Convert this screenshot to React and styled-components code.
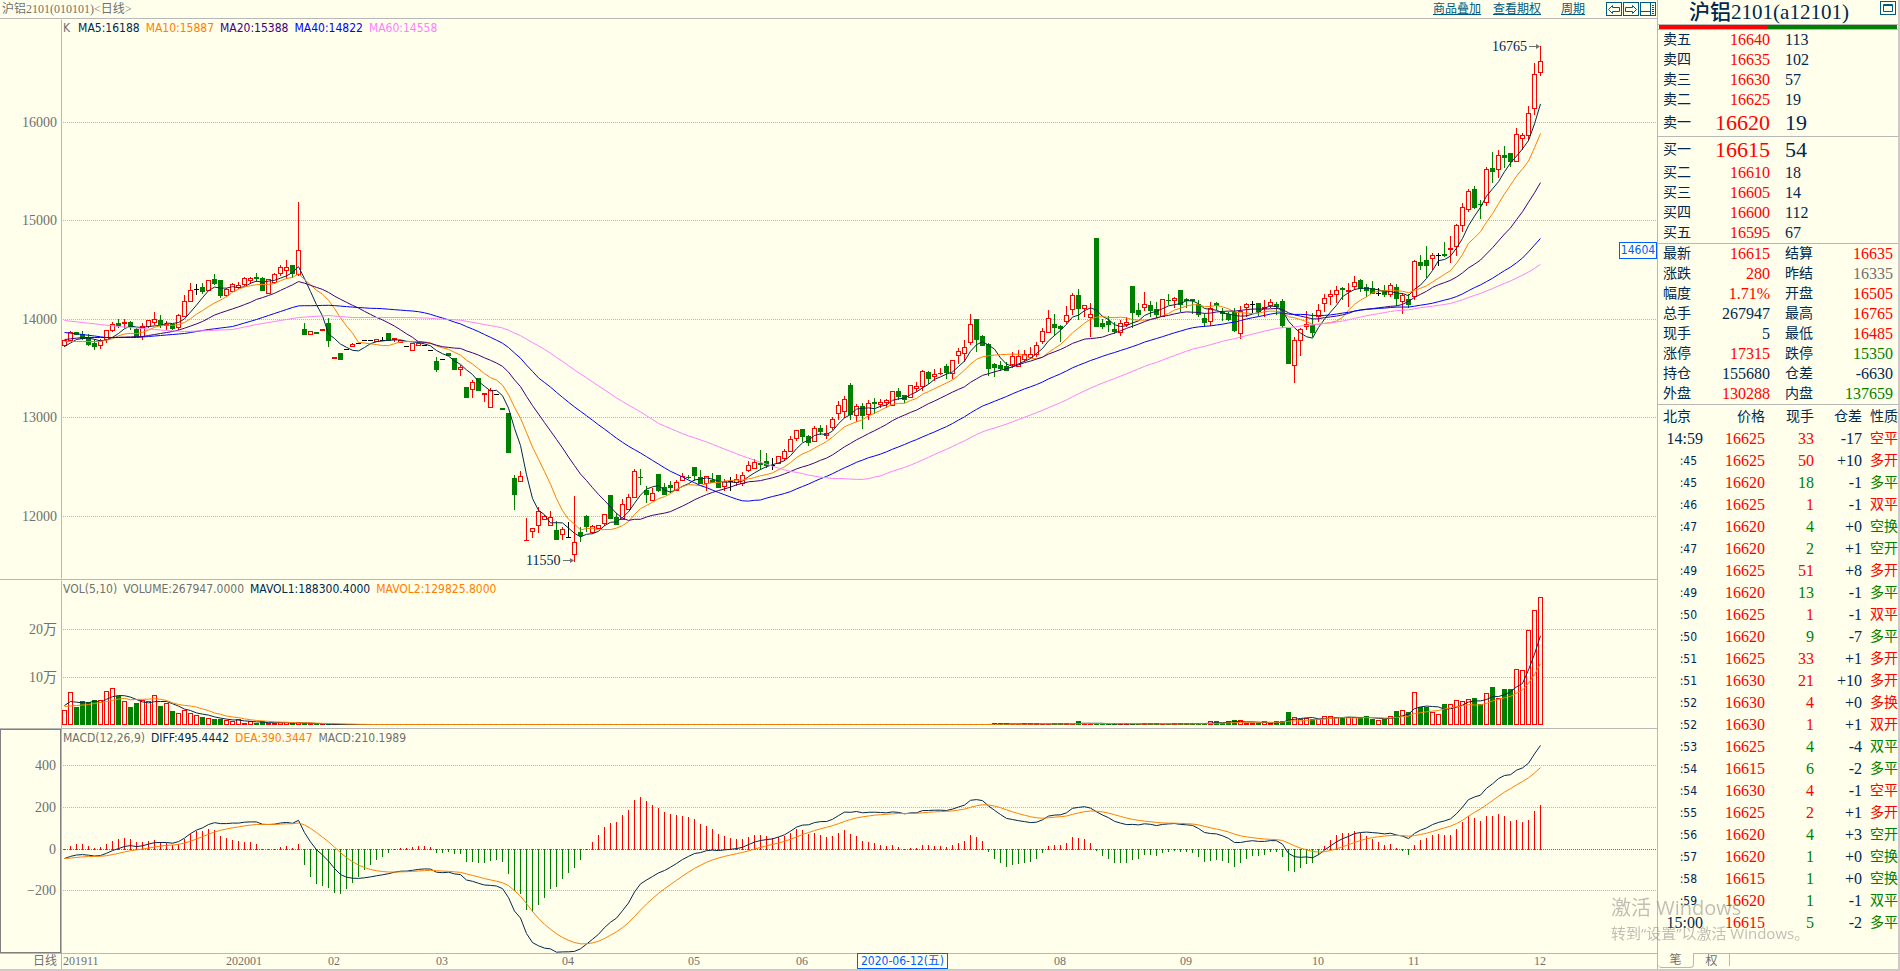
import React from "react";
import styled, { createGlobalStyle } from "styled-components";

const BG = "#ffffeb";
const LINE = "#b8b8b8";
const NAVY = "#002850";
const ORANGE = "#ff8000";
const PURPLE = "#400080";
const BLUE = "#0000ff";
const PINK = "#ff80ff";
const RED = "#ff0000";
const GREEN = "#008000";
const GREY = "#707070";
const LINK = "#005a82";

const COLORS = { r: RED, g: GREEN, k: "#000000", n: NAVY, d: GREY };

const DIGITS = `"Liberation Serif", "Noto Sans CJK SC", serif`;
const LABELS = `"DejaVu Sans Condensed", "Noto Sans", "Noto Sans CJK SC", sans-serif`;

const GlobalStyle = createGlobalStyle`
  * {
    box-sizing: border-box;
  }
  body {
    margin: 0;
    background: ${BG};
    color: ${NAVY};
    font-family: ${DIGITS};
  }
  button {
    border: none;
    background: none;
    padding: 0;
    cursor: pointer;
  }
`;

const Screen = styled.div`
  display: grid;
  grid-template-columns: minmax(0, 1fr) 241px;
  min-height: 100vh;
  border-right: 2px solid #d0c8c8;
  border-bottom: 2px solid #d0c8c8;
  overflow: hidden;
`;
const ChartColumn = styled.main`
  display: flex;
  flex-direction: column;
  min-width: 0;
`;
const TopBar = styled.header`
  display: flex;
  align-items: center;
  height: 19px;
  padding: 0 1px 0 2px;
  border-bottom: 1px solid ${LINE};
  font-size: 12px;
  color: ${GREY};

  h2 {
    margin: 0 auto 0 0;
    font-size: 12px;
    line-height: 18px;
    font-weight: normal;
  }
`;
const BarLinks = styled.nav`
  display: flex;
  gap: 12px;
  margin-right: 21px;
`;
const BarLink = styled.a`
  color: ${LINK};
  font-size: 12px;
  line-height: 16px;
  text-decoration: underline;
  margin-left: ${(props) => (props.$apart ? "8px" : "0")};
`;
const IconRow = styled.div`
  display: flex;
  gap: 1px;
`;
const IconButton = styled.button`
  display: block;
  line-height: 0;
  color: ${LINK};
`;

const Pane = styled.section`
  display: grid;
  grid-template-columns: 62px minmax(0, 1fr);
  height: ${(props) => props.$height}px;
  border-bottom: 1px solid ${LINE};
`;
const Gutter = styled.div`
  border: 1px solid ${(props) => (props.$active ? "#808080" : "transparent")};
  border-right: 1px solid ${LINE};
  box-shadow: ${(props) => (props.$active ? "inset -1px 0 #808080" : "none")};

  svg {
    display: block;
    width: 100%;
    height: 100%;
    overflow: visible;
  }
  text {
    font: 14px ${DIGITS};
    fill: ${GREY};
    text-anchor: end;
  }
`;
const Plot = styled.div`
  position: relative;

  svg {
    display: block;
    width: 100%;
    height: 100%;
  }
`;
const Legend = styled.div`
  position: absolute;
  top: 0;
  left: 1px;
  display: flex;
  gap: 6px;
  font: 12px/19px ${LABELS};
  white-space: nowrap;
`;
const LegendItem = styled.span`
  color: ${(props) => props.$color};
  margin-right: ${(props) => (props.$wide ? "2px" : "0")};
`;
const Mark = styled.text`
  font: ${(props) => props.$size}px ${DIGITS};
  fill: ${(props) => props.$color};
`;
const Tag = styled.div`
  position: absolute;
  height: 17px;
  border: 1px solid #0060ff;
  background: ${BG};
  color: #0060ff;
  font: 12px/15px ${LABELS};
  white-space: nowrap;
  text-align: center;
`;
const PriceTag = styled(Tag)`
  right: 0;
  top: 223px;
  width: 38px;
`;
const DateTag = styled(Tag)`
  left: 795px;
  top: -1px;
  height: 16px;
  width: 91px;
`;
const Axis = styled.div`
  display: grid;
  grid-template-columns: 62px minmax(0, 1fr);
  grid-template-rows: 15px;
  height: 15px;
  color: ${GREY};
  font-size: 12px;
  line-height: 15px;
`;
const Period = styled.div`
  border-right: 1px solid ${LINE};
  padding-right: 4px;
  text-align: right;
  overflow: hidden;
`;

const Side = styled.aside`
  display: flex;
  flex-direction: column;
  border-left: 1px solid ${LINE};
`;
const Title = styled.div`
  display: flex;
  height: 24px;
  padding: 1px 2px 0 0;

  h1 {
    flex: 1;
    margin: 0;
    font-size: 21px;
    line-height: 23px;
    font-weight: 500;
    text-align: center;
  }
  button {
    align-self: flex-start;
  }
`;
const Strength = styled.div`
  display: flex;
  height: 6px;
  padding: 0 1px;
  border: solid ${LINE};
  border-width: 1px 0;

  span {
    width: 46%;
    background: ${RED};
  }
  span + span {
    flex: 1;
    background: ${GREEN};
  }
`;
const Book = styled.table`
  width: 100%;
  table-layout: fixed;
  border-spacing: 0;
  border-bottom: 1px solid ${LINE};
  font-size: 16px;
`;
const BookRow = styled.tr`
  height: ${(props) => (props.$best ? "26px" : "20px")};
`;
const NameCell = styled.th`
  width: ${(props) => props.$width}px;
  padding: 0 0 0 ${(props) => props.$left}px;
  font-size: 14px;
  line-height: 16px;
  font-weight: normal;
  text-align: left;
`;
const NumCell = styled.td`
  width: ${(props) => (props.$width ? `${props.$width}px` : "auto")};
  padding: 0 ${(props) => props.$right || 0}px 0 0;
  font-size: ${(props) => (props.$best ? "22px" : "16px")};
  line-height: 18px;
  text-align: right;
  color: ${(props) => COLORS[props.$tone || "n"]};
`;
const LotCell = styled(NumCell)`
  padding-left: 15px;
  text-align: left;
`;

const Ticks = styled.table`
  width: 100%;
  table-layout: fixed;
  border-spacing: 0;
  font-size: 16px;

  th {
    height: 23px;
    padding: 0;
    font-size: 14px;
    line-height: 16px;
    font-weight: normal;
    text-align: right;
  }
  th:first-child {
    padding-left: 5px;
    text-align: left;
  }
  tbody tr {
    height: 22px;
  }
`;
const TimeCell = styled.td`
  padding: 0 ${(props) => (props.$full ? "0" : "6px")} 0 0;
  font: ${(props) => (props.$full ? `16px/18px ${DIGITS}` : `12px/18px ${LABELS}`)};
  text-align: right;
`;
const KindCell = styled.td`
  padding: 0;
  font-size: 14px;
  line-height: 16px;
  text-align: right;
  color: ${(props) => COLORS[props.$tone]};
`;
const Tabs = styled.div`
  display: flex;
  height: 16px;
  margin-top: auto;
  border-top: 1px solid ${LINE};
`;
const Tab = styled.button`
  width: 36px;
  height: ${(props) => (props.$active ? "15px" : "12px")};
  margin-top: ${(props) => (props.$active ? "-1px" : "0")};
  border-right: 1px solid ${LINE};
  border-bottom: ${(props) => (props.$active ? `1px solid ${LINE}` : "none")};
  border-radius: ${(props) => (props.$active ? "0 0 4px 4px" : "0")};
  background: ${BG};
  color: ${GREY};
  font: 12px/14px ${DIGITS};
`;
const Watermark = styled.div`
  position: fixed;
  right: 0;
  bottom: 28px;
  width: 289px;
  pointer-events: none;
  color: rgba(128, 128, 128, 0.5);
  font-family: "Open Sans", "Noto Sans CJK SC", sans-serif;
  font-size: 15px;
  line-height: 20px;
  white-space: nowrap;

  p {
    margin: 0;
  }
  p:first-child {
    font-size: 20px;
    line-height: 30px;
  }
`;

// one bar per entry: direction, high, body top, body bottom, low (chart rows)
const BARS = `
r 340 340 345 346;r 331 332 340 340;g 332 332 334 334;g 331 334 338 339;g 334 337 344 345;g 339 343 346 349;
r 339 340 345 348;r 330 330 339 342;r 322 324 330 331;g 319 323 325 327;r 319 322 323 327;g 321 322 326 329;
g 328 329 336 336;r 323 326 336 339;r 320 320 326 327;r 312 319 322 324;g 315 320 324 327;r 321 324 325 329;
g 324 324 328 329;r 314 315 327 329;r 295 301 316 316;r 283 290 301 301;k 284 289 289 294;g 283 287 291 293;
r 280 280 290 290;g 274 279 283 284;g 280 280 295 297;r 288 289 295 296;r 283 284 291 291;r 282 285 287 288;
r 277 278 284 285;r 277 278 280 283;g 273 277 278 281;g 277 278 290 290;r 279 279 293 293;r 273 274 282 283;
r 265 267 273 275;r 260 267 270 278;g 265 265 273 277;r 202 250 274 275;g 323 329 334 334;r 331 331 334 334;
g 332 332 333 333;r 329 329 330 330;g 318 323 340 346;r 357 357 358 358;g 353 353 359 359;k 349 349 349 349;
r 343 344 346 346;k 343 343 343 343;k 340 340 340 340;k 340 340 340 340;r 339 339 341 341;k 337 340 340 340;
g 333 333 340 340;r 338 338 339 341;r 340 340 342 342;k 346 346 346 346;r 343 343 350 350;r 343 343 345 345;
k 345 345 345 345;k 350 350 350 350;g 357 361 369 371;k 359 359 359 359;g 353 353 355 355;g 358 358 369 369;
r 365 367 369 375;g 387 387 397 397;r 380 382 389 397;g 378 378 390 390;r 393 393 394 401;r 388 390 407 407;
k 394 394 394 394;g 408 408 409 409;g 413 413 452 452;g 475 478 494 509;r 471 476 481 481;r 518 540 540 540;
r 528 528 531 537;r 507 511 525 532;r 515 516 519 519;r 511 517 525 525;g 521 530 539 539;r 527 529 534 539;
k 522 537 537 537;r 496 542 554 561;g 527 532 535 541;g 515 516 526 531;r 525 526 532 533;r 525 525 528 528;
r 514 514 523 525;g 495 495 518 518;g 513 517 524 524;r 499 504 519 519;r 494 497 509 509;r 469 471 497 497;
g 469 477 477 484;g 486 490 494 502;r 488 493 500 500;g 474 474 490 491;g 483 487 494 494;g 481 485 487 492;
r 480 482 490 490;r 473 476 480 480;g 475 477 477 478;g 467 467 475 480;g 470 477 483 483;r 476 476 483 490;
g 473 480 482 482;g 475 475 487 487;r 479 481 486 490;k 477 481 481 490;r 474 479 482 485;r 472 475 483 485;
r 461 465 470 471;r 459 462 468 468;g 450 463 464 469;g 453 461 465 467;k 458 465 465 469;r 456 456 463 463;
r 449 451 458 460;r 436 439 451 451;r 430 430 438 440;g 429 429 436 441;g 435 436 442 445;r 426 428 441 441;
g 425 428 431 434;r 425 433 435 438;r 417 419 427 429;r 401 405 413 419;r 396 399 411 417;g 383 385 414 419;
r 404 406 415 421;g 403 406 415 428;r 400 403 414 419;g 398 402 403 413;r 399 402 404 407;r 399 400 402 407;
r 391 391 405 405;g 388 391 396 399;g 395 395 399 402;r 385 385 397 397;r 382 386 388 391;r 370 371 386 390;
g 371 372 378 383;r 369 374 376 380;r 368 373 373 374;g 364 366 372 378;r 360 360 373 378;r 348 351 355 363;
r 340 347 353 361;r 314 324 342 344;g 319 319 339 351;g 335 336 345 345;g 343 344 368 375;g 363 364 367 376;
g 361 365 368 370;g 362 366 370 370;r 352 356 364 367;r 350 356 366 366;r 350 354 359 361;r 347 354 357 358;
r 342 345 354 356;r 328 331 341 343;r 310 318 332 332;g 314 324 327 335;g 325 326 328 341;r 306 315 321 323;
r 293 295 309 314;g 289 295 308 319;r 305 305 308 316;r 303 314 317 336;g 238 238 326 326;g 319 323 326 328;
g 316 321 324 331;g 322 329 331 333;r 320 323 332 335;r 317 322 324 326;g 286 286 312 327;g 303 310 314 316;
r 292 304 307 310;g 301 305 310 316;g 302 309 314 317;r 299 299 316 316;g 294 300 300 304;r 297 298 300 307;
g 290 290 304 311;g 298 299 300 307;g 299 299 300 313;g 300 304 314 316;g 313 318 322 326;r 302 308 321 325;
g 302 303 305 309;g 308 312 313 320;g 312 314 319 320;g 308 312 330 331;r 306 311 333 338;r 303 304 307 316;
k 301 304 304 312;g 303 303 311 315;r 300 307 308 316;r 299 302 305 307;g 302 304 306 314;g 299 301 325 327;
g 328 328 363 363;r 337 340 365 382;r 328 329 340 355;r 311 324 326 329;g 313 325 332 336;r 304 310 316 321;
r 294 298 303 311;r 290 294 296 304;r 286 290 294 302;g 287 288 289 299;r 283 290 291 306;r 276 282 286 289;
g 279 280 288 291;g 284 287 290 296;g 281 288 293 293;k 288 293 293 295;g 285 290 294 296;r 283 285 294 296;
g 284 287 298 305;r 293 295 301 313;g 294 299 304 307;r 260 261 296 299;g 255 262 265 269;g 246 260 265 277;
r 253 255 258 269;k 253 255 255 265;g 242 254 255 256;r 236 248 249 262;r 224 225 246 255;r 203 207 225 231;
r 189 191 209 211;g 186 189 207 208;g 200 204 204 218;r 167 169 202 205;g 152 168 171 182;r 150 155 169 177;
g 146 155 157 167;g 153 153 161 166;r 128 134 161 161;r 133 135 138 149;r 106 113 135 140;r 63 74 108 114;
r 46 61 72 75`
  .split(";")
  .map((row) => {
    const [dir, ...n] = row.trim().split(" ");
    const [high, top, bottom, low] = n.map(Number);
    return { dir, high, top, bottom, low, close: dir === "g" ? bottom : top };
  });

const VOL_HEAD = [
  15, 33, 18, 24, 23, 25, 25, 34, 37, 29, 24, 18, 22, 25, 24, 30, 19, 22, 14, 12, 15, 12, 10, 8, 7, 6, 6, 5, 4, 6, 2,
  4, 2, 4, 2, 2, 3, 3, 2, 3, 2, 2,
];
const VOL_TAIL = [
  2, 2, 2, 4, 4, 2, 4, 5, 5, 2, 2, 2, 4, 2, 4, 4, 13, 8, 6, 7, 6, 6, 9, 9, 8, 8, 8, 8, 8, 9, 6, 5, 6, 9, 14, 15, 13,
  33, 18, 18, 13, 11, 21, 21, 25, 24, 26, 27, 21, 32, 38, 27, 36, 36, 56, 55, 95, 115, 128,
];
const VOLUMES = BARS.map((bar, i) => {
  const tail = i - (BARS.length - VOL_TAIL.length);
  if (i < VOL_HEAD.length) return VOL_HEAD[i];
  if (tail >= 0) return VOL_TAIL[tail];
  if (i === 169) return 4;
  return i > 153 && i % 5 < 3 ? 2 : 1;
});

const STEP = 6;
const xOf = (i) => 2 + i * STEP;

// fills the bars before the window is full from [index, value] knots
const lead = (knots, i) => {
  const k = knots.findIndex((p) => p[0] >= i);
  if (k <= 0) return knots[Math.max(k, 0)][1];
  const [x0, y0] = knots[k - 1];
  const [x1, y1] = knots[k];
  return y0 + ((y1 - y0) * (i - x0)) / (x1 - x0);
};
const average = (values, size, knots) =>
  values.map((v, i) =>
    i < size - 1 ? lead(knots, i) : values.slice(i - size + 1, i + 1).reduce((a, b) => a + b, 0) / size
  );

const CLOSES = BARS.map((bar) => bar.close);
const MAS = [
  [5, NAVY, [[0, 346], [2, 339], [4, 337]]],
  [10, ORANGE, [[0, 341], [6, 341], [9, 337]]],
  [20, PURPLE, [[0, 339], [3, 337], [8, 337], [13, 336], [16, 333], [19, 330]]],
  [40, BLUE, [[0, 332], [3, 334], [7, 337], [12, 337], [16, 335], [20, 333], [24, 329], [28, 326], [32, 319], [39, 305]]],
  [60, PINK, [[0, 320], [9, 326], [17, 330], [20, 331], [28, 329], [32, 324], [39, 317], [44, 315], [48, 317], [59, 317]]],
].map(([size, color, knots]) => ({ color, values: average(CLOSES, size, knots) }));

const VOL_MAS = [
  { color: NAVY, values: average(VOLUMES, 5, [[0, 20], [1, 24], [4, 22]]) },
  { color: ORANGE, values: average(VOLUMES, 10, [[0, 19], [4, 21], [9, 26]]) },
];

const MACD = (() => {
  let fast = 340.2;
  let slow = 336;
  let dea = -9;
  return CLOSES.map((close, i) => {
    if (i > 0) {
      fast += ((close - fast) * 2) / 13;
      slow += ((close - slow) * 2) / 27;
    }
    const diff = (slow - fast) * 2.132;
    if (i > 0) dea += (diff - dea) / 5;
    return { diff, dea, bar: Math.round((diff - dea) * 2) };
  });
})();

const MONTHS = [
  [27, "202001"],
  [44, "02"],
  [62, "03"],
  [83, "04"],
  [104, "05"],
  [122, "06"],
  [165, "08"],
  [186, "09"],
  [208, "10"],
  [224, "11"],
  [245, "12"],
];

const ASKS = [
  ["卖五", "16640", "113"],
  ["卖四", "16635", "102"],
  ["卖三", "16630", "57"],
  ["卖二", "16625", "19"],
  ["卖一", "16620", "19"],
];
const BIDS = [
  ["买一", "16615", "54"],
  ["买二", "16610", "18"],
  ["买三", "16605", "14"],
  ["买四", "16600", "112"],
  ["买五", "16595", "67"],
];
const STATS = [
  ["最新", "16615", "r", "结算", "16635", "r"],
  ["涨跌", "280", "r", "昨结", "16335", "d"],
  ["幅度", "1.71%", "r", "开盘", "16505", "r"],
  ["总手", "267947", "n", "最高", "16765", "r"],
  ["现手", "5", "n", "最低", "16485", "r"],
  ["涨停", "17315", "r", "跌停", "15350", "g"],
  ["持仓", "155680", "n", "仓差", "-6630", "n"],
  ["外盘", "130288", "r", "内盘", "137659", "g"],
];
const TICKS = [
  ["14:59", "16625", "33", "-17", "空平", "r"],
  [":45", "16625", "50", "+10", "多开", "r"],
  [":45", "16620", "18", "-1", "多平", "g"],
  [":46", "16625", "1", "-1", "双平", "r"],
  [":47", "16620", "4", "+0", "空换", "g"],
  [":47", "16620", "2", "+1", "空开", "g"],
  [":49", "16625", "51", "+8", "多开", "r"],
  [":49", "16620", "13", "-1", "多平", "g"],
  [":50", "16625", "1", "-1", "双平", "r"],
  [":50", "16620", "9", "-7", "多平", "g"],
  [":51", "16625", "33", "+1", "多开", "r"],
  [":51", "16630", "21", "+10", "多开", "r"],
  [":52", "16630", "4", "+0", "多换", "r"],
  [":52", "16630", "1", "+1", "双开", "r"],
  [":53", "16625", "4", "-4", "双平", "g"],
  [":54", "16615", "6", "-2", "多平", "g"],
  [":54", "16630", "4", "-1", "空平", "r"],
  [":55", "16625", "2", "+1", "多开", "r"],
  [":56", "16620", "4", "+3", "空开", "g"],
  [":57", "16620", "1", "+0", "空换", "g"],
  [":58", "16615", "1", "+0", "空换", "g"],
  [":59", "16620", "1", "-1", "双平", "g"],
  ["15:00", "16615", "5", "-2", "多平", "g"],
];

const GridLine = ({ y, dark }) => (
  <line
    x1="1"
    x2="100%"
    y1={y + 0.5}
    y2={y + 0.5}
    stroke={dark ? "#707070" : "#b8b8b8"}
    strokeDasharray="1 1"
    shapeRendering="crispEdges"
  />
);

const Curve = ({ values, color }) => (
  <polyline
    fill="none"
    stroke={color}
    points={values.map((v, i) => `${xOf(i) + 0.5},${(v + 0.5).toFixed(1)}`).join(" ")}
  />
);

const Candle = ({ bar, i }) => {
  const x = xOf(i);
  const color = COLORS[bar.dir];
  const height = bar.bottom - bar.top;
  return (
    <g>
      <rect x={x} y={bar.high} width="1" height={bar.low - bar.high + 1} fill={color} />
      <rect x={x - 2} y={bar.top} width="5" height={height + 1} fill={color} />
      {bar.dir === "r" && height > 1 && (
        <rect x={x - 1} y={bar.top + 1} width="3" height={height - 1} fill={BG} />
      )}
    </g>
  );
};

const VolumeBar = ({ dir, value, i }) => {
  const x = xOf(i);
  const hollow = dir !== "g" && value > 2;
  return (
    <g>
      <rect x={x - 2} y={145 - value} width="5" height={value} fill={dir === "g" ? GREEN : RED} />
      {hollow && <rect x={x - 1} y={146 - value} width="3" height={value - 2} fill={BG} />}
    </g>
  );
};

const Arrow = ({ x, y }) => (
  <g>
    <path d={`M${x} ${y + 0.5}h10`} stroke={GREY} />
    <path d={`M${x + 7} ${y - 2}l4 2.5l-4 2.5z`} fill={GREY} />
  </g>
);

const Icon = ({ children }) => (
  <svg width="16" height="15" viewBox="0 0 16 15" fill="none" stroke="currentColor" aria-hidden="true">
    <rect x="0.5" y="0.5" width="15" height="13" />
    {children}
  </svg>
);

const BookTable = ({ rows, best }) => (
  <Book>
    <tbody>
      {rows.map(([name, price, lots]) => (
        <BookRow key={name} $best={name === best}>
          <NameCell scope="row" $left={5} $width={48}>
            {name}
          </NameCell>
          <NumCell $tone="r" $width={64} $best={name === best}>
            {price}
          </NumCell>
          <LotCell $best={name === best}>{lots}</LotCell>
        </BookRow>
      ))}
    </tbody>
  </Book>
);

const PricePane = () => (
  <Pane $height={561}>
    <Gutter>
      <svg>
        {[16000, 15000, 14000, 13000, 12000].map((p, i) => (
          <text key={p} x="56" y={[107, 205, 304, 402, 501][i]}>
            {p}
          </text>
        ))}
      </svg>
    </Gutter>
    <Plot>
      <svg>
        {[103, 201, 300, 398, 497].map((y) => (
          <GridLine key={y} y={y} />
        ))}
        <g transform="translate(0 -19)">
          <g shapeRendering="crispEdges">
            {BARS.map((bar, i) => (
              <Candle key={i} bar={bar} i={i} />
            ))}
          </g>
          {MAS.map((ma) => (
            <Curve key={ma.color} {...ma} />
          ))}
          <Mark x="1430" y="51" $size={14} $color={NAVY}>
            16765
          </Mark>
          <Arrow x={1467} y={46} />
          <Mark x="464" y="565" $size={14} $color={NAVY}>
            11550
          </Mark>
          <Arrow x={501} y={560} />
        </g>
      </svg>
      <Legend>
        <LegendItem $color={GREY} $wide>
          K
        </LegendItem>
        <LegendItem $color={NAVY}>MA5:16188</LegendItem>
        <LegendItem $color={ORANGE}>MA10:15887</LegendItem>
        <LegendItem $color={PURPLE}>MA20:15388</LegendItem>
        <LegendItem $color={BLUE}>MA40:14822</LegendItem>
        <LegendItem $color={PINK}>MA60:14558</LegendItem>
      </Legend>
      <PriceTag>14604</PriceTag>
    </Plot>
  </Pane>
);

const VolumePane = () => (
  <Pane $height={149}>
    <Gutter>
      <svg>
        <text x="56" y="53">20万</text>
        <text x="56" y="101">10万</text>
      </svg>
    </Gutter>
    <Plot>
      <svg>
        <GridLine y={49} />
        <GridLine y={97} />
        <g shapeRendering="crispEdges">
          {VOLUMES.map((value, i) => (
            <VolumeBar key={i} dir={BARS[i].dir} value={value} i={i} />
          ))}
        </g>
        {VOL_MAS.map((ma) => (
          <Curve key={ma.color} color={ma.color} values={ma.values.map((v) => 145 - v)} />
        ))}
      </svg>
      <Legend>
        <LegendItem $color={GREY}>VOL(5,10)</LegendItem>
        <LegendItem $color={GREY}>VOLUME:267947.0000</LegendItem>
        <LegendItem $color={NAVY}>MAVOL1:188300.4000</LegendItem>
        <LegendItem $color={ORANGE}>MAVOL2:129825.8000</LegendItem>
      </Legend>
    </Plot>
  </Pane>
);

const MacdPane = () => (
  <Pane $height={225}>
    <Gutter $active>
      <svg>
        {[
          [400, 40],
          [200, 82],
          [0, 124],
          ["−200", 165],
        ].map(([label, y]) => (
          <text key={y} x="55" y={y}>
            {label}
          </text>
        ))}
      </svg>
    </Gutter>
    <Plot>
      <svg>
        <GridLine y={36} />
        <GridLine y={78} />
        <GridLine y={120} dark />
        <GridLine y={161} />
        <g shapeRendering="crispEdges">
          {MACD.map(({ bar }, i) => (
            <rect
              key={i}
              x={xOf(i)}
              y={bar > 0 ? 120 - bar : 120}
              width="1"
              height={Math.abs(bar) + 1}
              fill={bar > 0 ? RED : GREEN}
            />
          ))}
        </g>
        <Curve color={NAVY} values={MACD.map((m) => 120 - m.diff)} />
        <Curve color={ORANGE} values={MACD.map((m) => 120 - m.dea)} />
      </svg>
      <Legend>
        <LegendItem $color={GREY}>MACD(12,26,9)</LegendItem>
        <LegendItem $color={NAVY}>DIFF:495.4442</LegendItem>
        <LegendItem $color={ORANGE}>DEA:390.3447</LegendItem>
        <LegendItem $color={GREY}>MACD:210.1989</LegendItem>
      </Legend>
    </Plot>
  </Pane>
);

const SidePanel = () => (
  <Side>
    <Title>
      <h1>沪铝2101(a12101)</h1>
      <IconButton aria-label="最大化">
        <Icon>
          <path d="M3.5 3.5h9v7h-9zM3.5 4.5h9" />
        </Icon>
      </IconButton>
    </Title>
    <Strength>
      <span />
      <span />
    </Strength>
    <BookTable rows={ASKS} best="卖一" />
    <BookTable rows={BIDS} best="买一" />
    <Book>
      <tbody>
        {STATS.map(([a, av, at, b, bv, bt]) => (
          <BookRow key={a}>
            <NameCell scope="row" $left={5} $width={48}>
              {a}
            </NameCell>
            <NumCell $tone={at} $width={64}>
              {av}
            </NumCell>
            <NameCell scope="row" $left={15} $width={58}>
              {b}
            </NameCell>
            <NumCell $tone={bt} $right={5}>
              {bv}
            </NumCell>
          </BookRow>
        ))}
      </tbody>
    </Book>
    <Ticks>
      <colgroup>
        <col width="45" />
        <col width="62" />
        <col width="49" />
        <col width="48" />
        <col />
      </colgroup>
      <thead>
        <tr>
          <th>北京</th>
          <th>价格</th>
          <th>现手</th>
          <th>仓差</th>
          <th>性质</th>
        </tr>
      </thead>
      <tbody>
        {TICKS.map(([time, price, lots, diff, kind, tone], i) => (
          <tr key={i}>
            <TimeCell $full={time.length > 3}>{time}</TimeCell>
            <NumCell $tone="r">{price}</NumCell>
            <NumCell $tone={tone}>{lots}</NumCell>
            <NumCell>{diff}</NumCell>
            <KindCell $tone={tone}>{kind}</KindCell>
          </tr>
        ))}
      </tbody>
    </Ticks>
    <Tabs>
      <Tab $active>笔</Tab>
      <Tab>权</Tab>
    </Tabs>
  </Side>
);

const App = () => (
  <>
    <GlobalStyle />
    <Screen>
      <ChartColumn>
        <TopBar>
          <h2>沪铝2101(010101)&lt;日线&gt;</h2>
          <BarLinks>
            <BarLink href="#overlay">商品叠加</BarLink>
            <BarLink href="#options">查看期权</BarLink>
            <BarLink href="#period" $apart>
              周期
            </BarLink>
          </BarLinks>
          <IconRow>
            <IconButton aria-label="向左">
              <Icon>
                <path d="M2.5 7.5l4-4v2h7v4h-7v2z" />
              </Icon>
            </IconButton>
            <IconButton aria-label="向右">
              <Icon>
                <path d="M13.5 7.5l-4-4v2h-7v4h7v2z" />
              </Icon>
            </IconButton>
            <IconButton aria-label="布局">
              <Icon>
                <path d="M10.5 1v13M1 9.5h9M12 3.5h2M12 5.5h2M12 7.5h2M12 9.5h2M12 11.5h2" />
              </Icon>
            </IconButton>
          </IconRow>
        </TopBar>
        <PricePane />
        <VolumePane />
        <MacdPane />
        <Axis>
          <Period>日线</Period>
          <Plot>
            <svg>
              <Mark x="1" y="11" $size={12} $color={GREY}>
                201911
              </Mark>
              {MONTHS.map(([i, label]) => (
                <Mark key={label} x={xOf(i)} y="11" $size={12} $color={GREY}>
                  {label}
                </Mark>
              ))}
            </svg>
            <DateTag>2020-06-12(五)</DateTag>
          </Plot>
        </Axis>
      </ChartColumn>
      <SidePanel />
    </Screen>
    <Watermark>
      <p>激活 Windows</p>
      <p>转到“设置”以激活 Windows。</p>
    </Watermark>
  </>
);

export default App;
